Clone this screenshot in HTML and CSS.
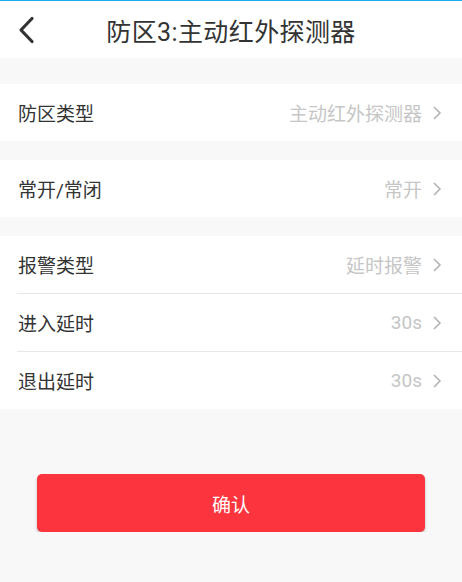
FILE: index.html
```html
<!DOCTYPE html>
<html lang="zh-CN">
<head>
    <meta charset="UTF-8">
    <meta name="viewport" content="width=device-width, initial-scale=1.0">
    <title>防区设置</title>
    <link rel="stylesheet" href="styles.css">
</head>
<body>
    <div class="topline"></div>
    <div class="header">
        <span class="back">
            <svg width="18" height="28" viewBox="0 0 18 28"><path d="M15 2.5 L4 14 L15 25.5" fill="none" stroke="#333" stroke-width="3.2" stroke-linecap="round" stroke-linejoin="round"/></svg>
        </span>
        <div class="title">防区3:主动红外探测器</div>
    </div>

    <div class="group first">
        <div class="row">
            <span class="label">防区类型</span>
            <span class="value">主动红外探测器</span>
            <svg class="arrow" width="10" height="16" viewBox="0 0 10 16"><path d="M2 2 L8 8 L2 14" fill="none" stroke="#b4b4b4" stroke-width="1.6"/></svg>
        </div>
    </div>

    <div class="group">
        <div class="row">
            <span class="label">常开/常闭</span>
            <span class="value">常开</span>
            <svg class="arrow" width="10" height="16" viewBox="0 0 10 16"><path d="M2 2 L8 8 L2 14" fill="none" stroke="#b4b4b4" stroke-width="1.6"/></svg>
        </div>
    </div>

    <div class="group">
        <div class="row">
            <span class="label">报警类型</span>
            <span class="value">延时报警</span>
            <svg class="arrow" width="10" height="16" viewBox="0 0 10 16"><path d="M2 2 L8 8 L2 14" fill="none" stroke="#b4b4b4" stroke-width="1.6"/></svg>
        </div>
        <div class="row line">
            <span class="label">进入延时</span>
            <span class="value">30s</span>
            <svg class="arrow" width="10" height="16" viewBox="0 0 10 16"><path d="M2 2 L8 8 L2 14" fill="none" stroke="#b4b4b4" stroke-width="1.6"/></svg>
        </div>
        <div class="row line">
            <span class="label">退出延时</span>
            <span class="value">30s</span>
            <svg class="arrow" width="10" height="16" viewBox="0 0 10 16"><path d="M2 2 L8 8 L2 14" fill="none" stroke="#b4b4b4" stroke-width="1.6"/></svg>
        </div>
    </div>

    <div class="actions">
        <button class="confirm">确认</button>
    </div>
</body>
</html>
```

FILE: styles.css
```css
body {
    margin: 0;
    background: #f8f8f8;
    font-family: Roboto, "Noto Sans CJK SC", sans-serif;
    color: #333;
}
.topline {
    height: 1px;
    background: #1aaef0;
}
.header {
    height: 57px;
    background: #fff;
    display: flex;
    align-items: center;
    justify-content: center;
    position: relative;
}
.back {
    position: absolute;
    left: 17px;
    top: 15px;
}
.title {
    font-size: 25px;
    color: #333;
    letter-spacing: 0.4px;
}
.group {
    background: #fff;
    margin-top: 19px;
}
.group.first {
    margin-top: 26px;
}
.row {
    height: 57px;
    display: flex;
    align-items: center;
    padding: 0 20px 0 18px;
}
.row.line {
    border-top: 1px solid #e8e8e8;
    margin-left: 17px;
    padding-left: 1px;
}
.label {
    font-size: 19px;
    color: #333;
    flex: 1;
}
.value {
    font-size: 19px;
    color: #c6c6c6;
    margin-right: 10px;
}
.arrow {
    display: block;
}
.actions {
    padding: 65px 37px 0;
}
.confirm {
    width: 100%;
    height: 58px;
    border: none;
    border-radius: 5px;
    background: #fc343e;
    color: #fff;
    font-family: Roboto, "Noto Sans CJK SC", sans-serif;
    font-size: 19px;
    box-shadow: 0 2px 3px rgba(0, 0, 0, 0.25);
}
```
